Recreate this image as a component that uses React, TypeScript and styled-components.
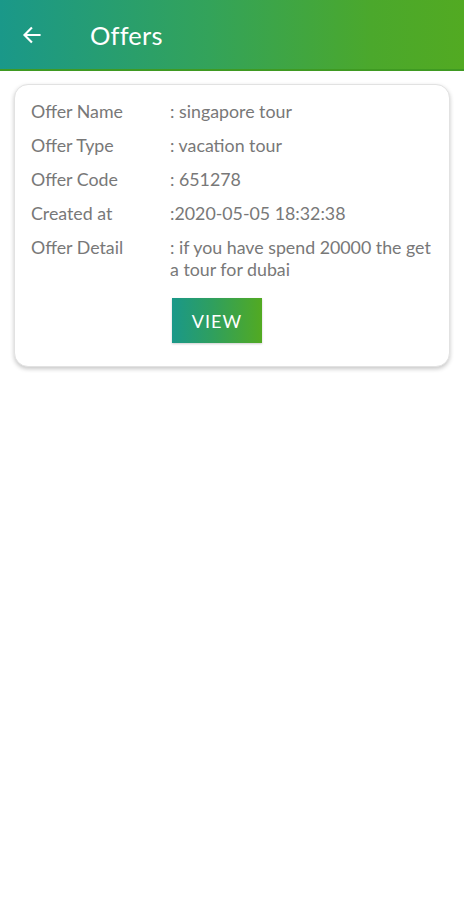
import React from 'react'
import styled, { createGlobalStyle } from 'styled-components'

const GlobalStyle = createGlobalStyle`
  body {
    margin: 0;
    background: #ffffff;
    font-family: Lato, "Open Sans", sans-serif;
  }
`

const Screen = styled.div`
  width: 464px;
  min-height: 900px;
  background: #fff;
`

const Header = styled.header`
  height: 69px;
  display: flex;
  align-items: center;
  background: linear-gradient(90deg, #1a9889 0%, #33a35a 45%, #4ba82c 80%, #52aa22 100%);
  border-bottom: 2px solid #3f9a22;
  color: #fff;
`

const BackButton = styled.button`
  width: 40px;
  height: 40px;
  margin-left: 12px;
  padding: 0;
  border: none;
  background: transparent;
  display: flex;
  align-items: center;
  justify-content: center;
  color: #fff;
`

const Title = styled.h1`
  margin: 0 0 0 38px;
  font-size: 25.5px;
  font-weight: 400;
  letter-spacing: 0.2px;
`

const Card = styled.div`
  margin: 13px 14px 0 14px;
  padding: 15px 14px 23px 16px;
  border: 1px solid #e2e2e2;
  border-radius: 14px;
  box-shadow: 0 2px 4px rgba(0, 0, 0, 0.22);
  background: #fff;
`

const Row = styled.div`
  display: grid;
  grid-template-columns: 139px 1fr;
  color: #787878;
  font-size: 17.8px;
  line-height: 22px;
  margin-bottom: 12px;
`

const Label = styled.span``

const Value = styled.span``

const Actions = styled.div`
  padding-left: 141px;
  margin-top: 18px;
`

const ViewButton = styled.button`
  width: 90px;
  height: 45px;
  border: none;
  background: linear-gradient(90deg, #1a9889 0%, #2f9f5e 45%, #52aa22 100%);
  color: #fff;
  font-family: Lato, "Open Sans", sans-serif;
  font-size: 18px;
  letter-spacing: 1px;
  box-shadow: 0 1px 2px rgba(0, 0, 0, 0.2);
`

const offer = [
  ['Offer Name', ': singapore tour'],
  ['Offer Type', ': vacation tour'],
  ['Offer Code', ': 651278'],
  ['Created at', ':2020-05-05 18:32:38'],
  ['Offer Detail', ': if you have spend 20000 the get a tour for dubai'],
]

export default function App() {
  return (
    <Screen>
      <GlobalStyle />
      <Header>
        <BackButton>
          <svg width="20" height="20" viewBox="0 0 24 24" fill="none" stroke="#fff" strokeWidth="2.6" strokeLinecap="square">
            <path d="M21 12H4M11 4l-8 8 8 8" />
          </svg>
        </BackButton>
        <Title>Offers</Title>
      </Header>
      <Card>
        {offer.map(([k, v]) => (
          <Row key={k}>
            <Label>{k}</Label>
            <Value>{v}</Value>
          </Row>
        ))}
        <Actions>
          <ViewButton>VIEW</ViewButton>
        </Actions>
      </Card>
    </Screen>
  )
}
